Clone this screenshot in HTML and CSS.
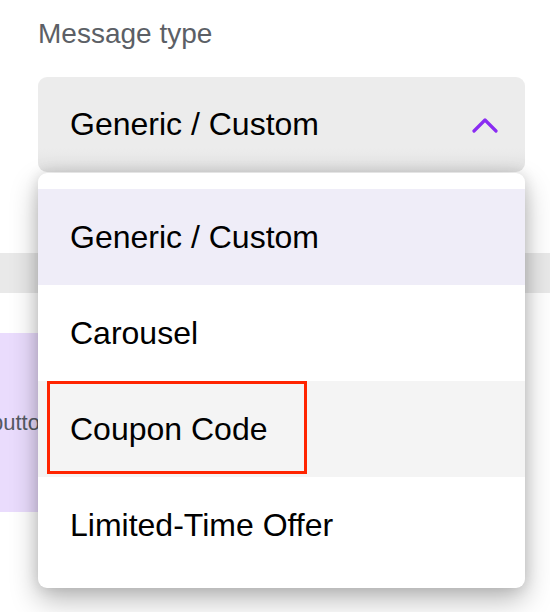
FILE: index.html
```html
<!DOCTYPE html>
<html lang="en">
<head>
  <meta charset="UTF-8">
  <meta name="viewport" content="width=device-width, initial-scale=1.0">
  <title>Message type</title>
  <link rel="stylesheet" href="styles.css">
</head>
<body>
  <div class="page">
    <div class="field">
      <label class="field-label">Message type</label>
      <div class="select-wrap">
        <div class="select">
          <span class="select-value">Generic / Custom</span>
          <svg class="chevron" width="26" height="16" viewBox="0 0 26 16">
            <path d="M2 14 L13 3 L24 14" fill="none" stroke="#8a2cf2" stroke-width="3.2" stroke-linecap="round" stroke-linejoin="round"/>
          </svg>
        </div>

        <ul class="menu">
          <li class="option selected">Generic / Custom</li>
          <li class="option">Carousel</li>
          <li class="option hover">Coupon Code<span class="callout"></span></li>
          <li class="option">Limited-Time Offer</li>
        </ul>
      </div>
    </div>

    <div class="tabs-bar"></div>

    <div class="preview-card">
      <span class="preview-text">button text</span>
    </div>
  </div>
</body>
</html>
```

FILE: styles.css
```css
body {
  font-family: 'Liberation Sans', Arial, sans-serif;
  background: #fff;
  margin: 0;
  padding: 0;
  overflow: hidden;
}
.page {
  height: 612px;
}
.field {
  padding: 17px 25px 0 38px;
}
.field-label {
  display: block;
  font-size: 28px;
  line-height: 34px;
  color: #5c5f66;
}
.select-wrap {
  position: relative;
  margin-top: 26px;
  z-index: 2;
}
.select {
  height: 95px;
  display: flex;
  align-items: center;
  justify-content: space-between;
  padding: 0 27px 0 32px;
  background: linear-gradient(#ececec 75%, #e2e2e2);
  border-radius: 9px;
}
.select-value {
  font-size: 32px;
  color: #000;
}
.chevron {
  display: block;
}
.menu {
  position: absolute;
  top: 96px;
  left: 0;
  right: 0;
  margin: 0;
  padding: 16px 0 15px;
  list-style: none;
  background: #fff;
  border-radius: 9px;
  box-shadow: 0 12px 28px rgba(0,0,0,0.28), 0 0 14px rgba(0,0,0,0.12);
}
.option {
  position: relative;
  height: 96px;
  display: flex;
  align-items: center;
  padding-left: 32px;
  font-size: 32px;
  color: #000;
}
.option.selected {
  background: #efedf8;
}
.option.hover {
  background: #f4f4f4;
}
.callout {
  position: absolute;
  left: 9px;
  top: 0;
  width: 254px;
  height: 87px;
  border: 3px solid #ff2400;
}
.tabs-bar {
  margin-top: 81px;
  height: 40px;
  background: #e9e9e9;
}
.preview-card {
  margin-top: 40px;
  width: 80px;
  height: 179px;
  background: #eadcfd;
  display: flex;
  align-items: center;
  overflow: hidden;
}
.preview-text {
  margin-left: -9px;
  font-size: 22px;
  color: #555a63;
  white-space: nowrap;
}
```
